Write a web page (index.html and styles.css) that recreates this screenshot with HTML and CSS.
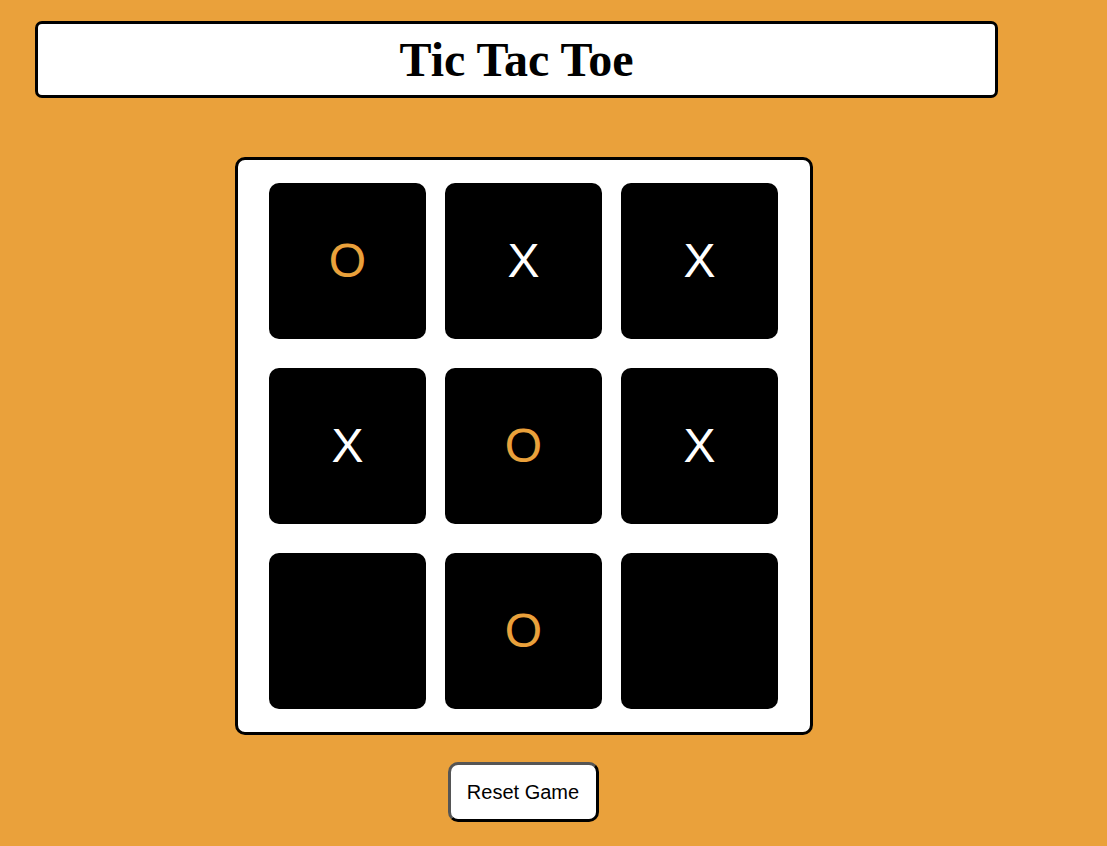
FILE: index.html
```html
<!DOCTYPE html>
<html lang="en">
<head>
<meta charset="utf-8">
<title>Tic Tac Toe</title>
<link rel="stylesheet" href="styles.css">
</head>
<body>
  <header class="title-box">
    <h1 class="title">Tic Tac Toe</h1>
  </header>
  <main class="game">
    <div class="board">
      <div class="cell o">O</div>
      <div class="cell x">X</div>
      <div class="cell x">X</div>
      <div class="cell x">X</div>
      <div class="cell o">O</div>
      <div class="cell x">X</div>
      <div class="cell"></div>
      <div class="cell o">O</div>
      <div class="cell"></div>
    </div>
    <button class="reset">Reset Game</button>
  </main>
</body>
</html>
```
FILE: styles.css
```css
html, body {
  margin: 0;
  padding: 0;
}

body {
  background: #eaa13b;
  min-height: 846px;
  overflow: hidden;
}

.title-box {
  box-sizing: border-box;
  width: 963px;
  height: 77px;
  margin: 21px 0 0 35px;
  background: #fff;
  border: 3px solid #000;
  border-radius: 7px;
  display: flex;
  align-items: center;
  justify-content: center;
}

.title {
  margin: 0;
  font-family: "Liberation Serif", "Times New Roman", serif;
  font-weight: bold;
  font-size: 48px;
  line-height: 1;
  color: #000;
}

.game {
  width: 578px;
  margin: 59px 0 0 235px;
  display: flex;
  flex-direction: column;
  align-items: center;
}

.board {
  box-sizing: border-box;
  width: 578px;
  height: 578px;
  background: #fff;
  border: 3px solid #000;
  border-radius: 10px;
  padding: 23px 32px 23px 31px;
  display: grid;
  grid-template-columns: repeat(3, 157px);
  grid-template-rows: repeat(3, 156px);
  column-gap: 19px;
  row-gap: 29px;
}

.cell {
  background: #000;
  border-radius: 10px;
  display: flex;
  align-items: center;
  justify-content: center;
  font-family: "Liberation Sans", Arial, sans-serif;
  font-size: 48px;
  line-height: 1;
}

.cell.x {
  color: #fff;
}

.cell.o {
  color: #eaa13b;
}

.reset {
  box-sizing: border-box;
  margin: 27px 2px 0 0;
  width: 151px;
  height: 60px;
  background: #fff;
  border: 3px solid;
  border-color: #555 #000 #000 #555;
  border-radius: 10px;
  font-family: "Liberation Sans", Arial, sans-serif;
  font-size: 20px;
  color: #000;
  padding: 0;
  cursor: pointer;
}
```
